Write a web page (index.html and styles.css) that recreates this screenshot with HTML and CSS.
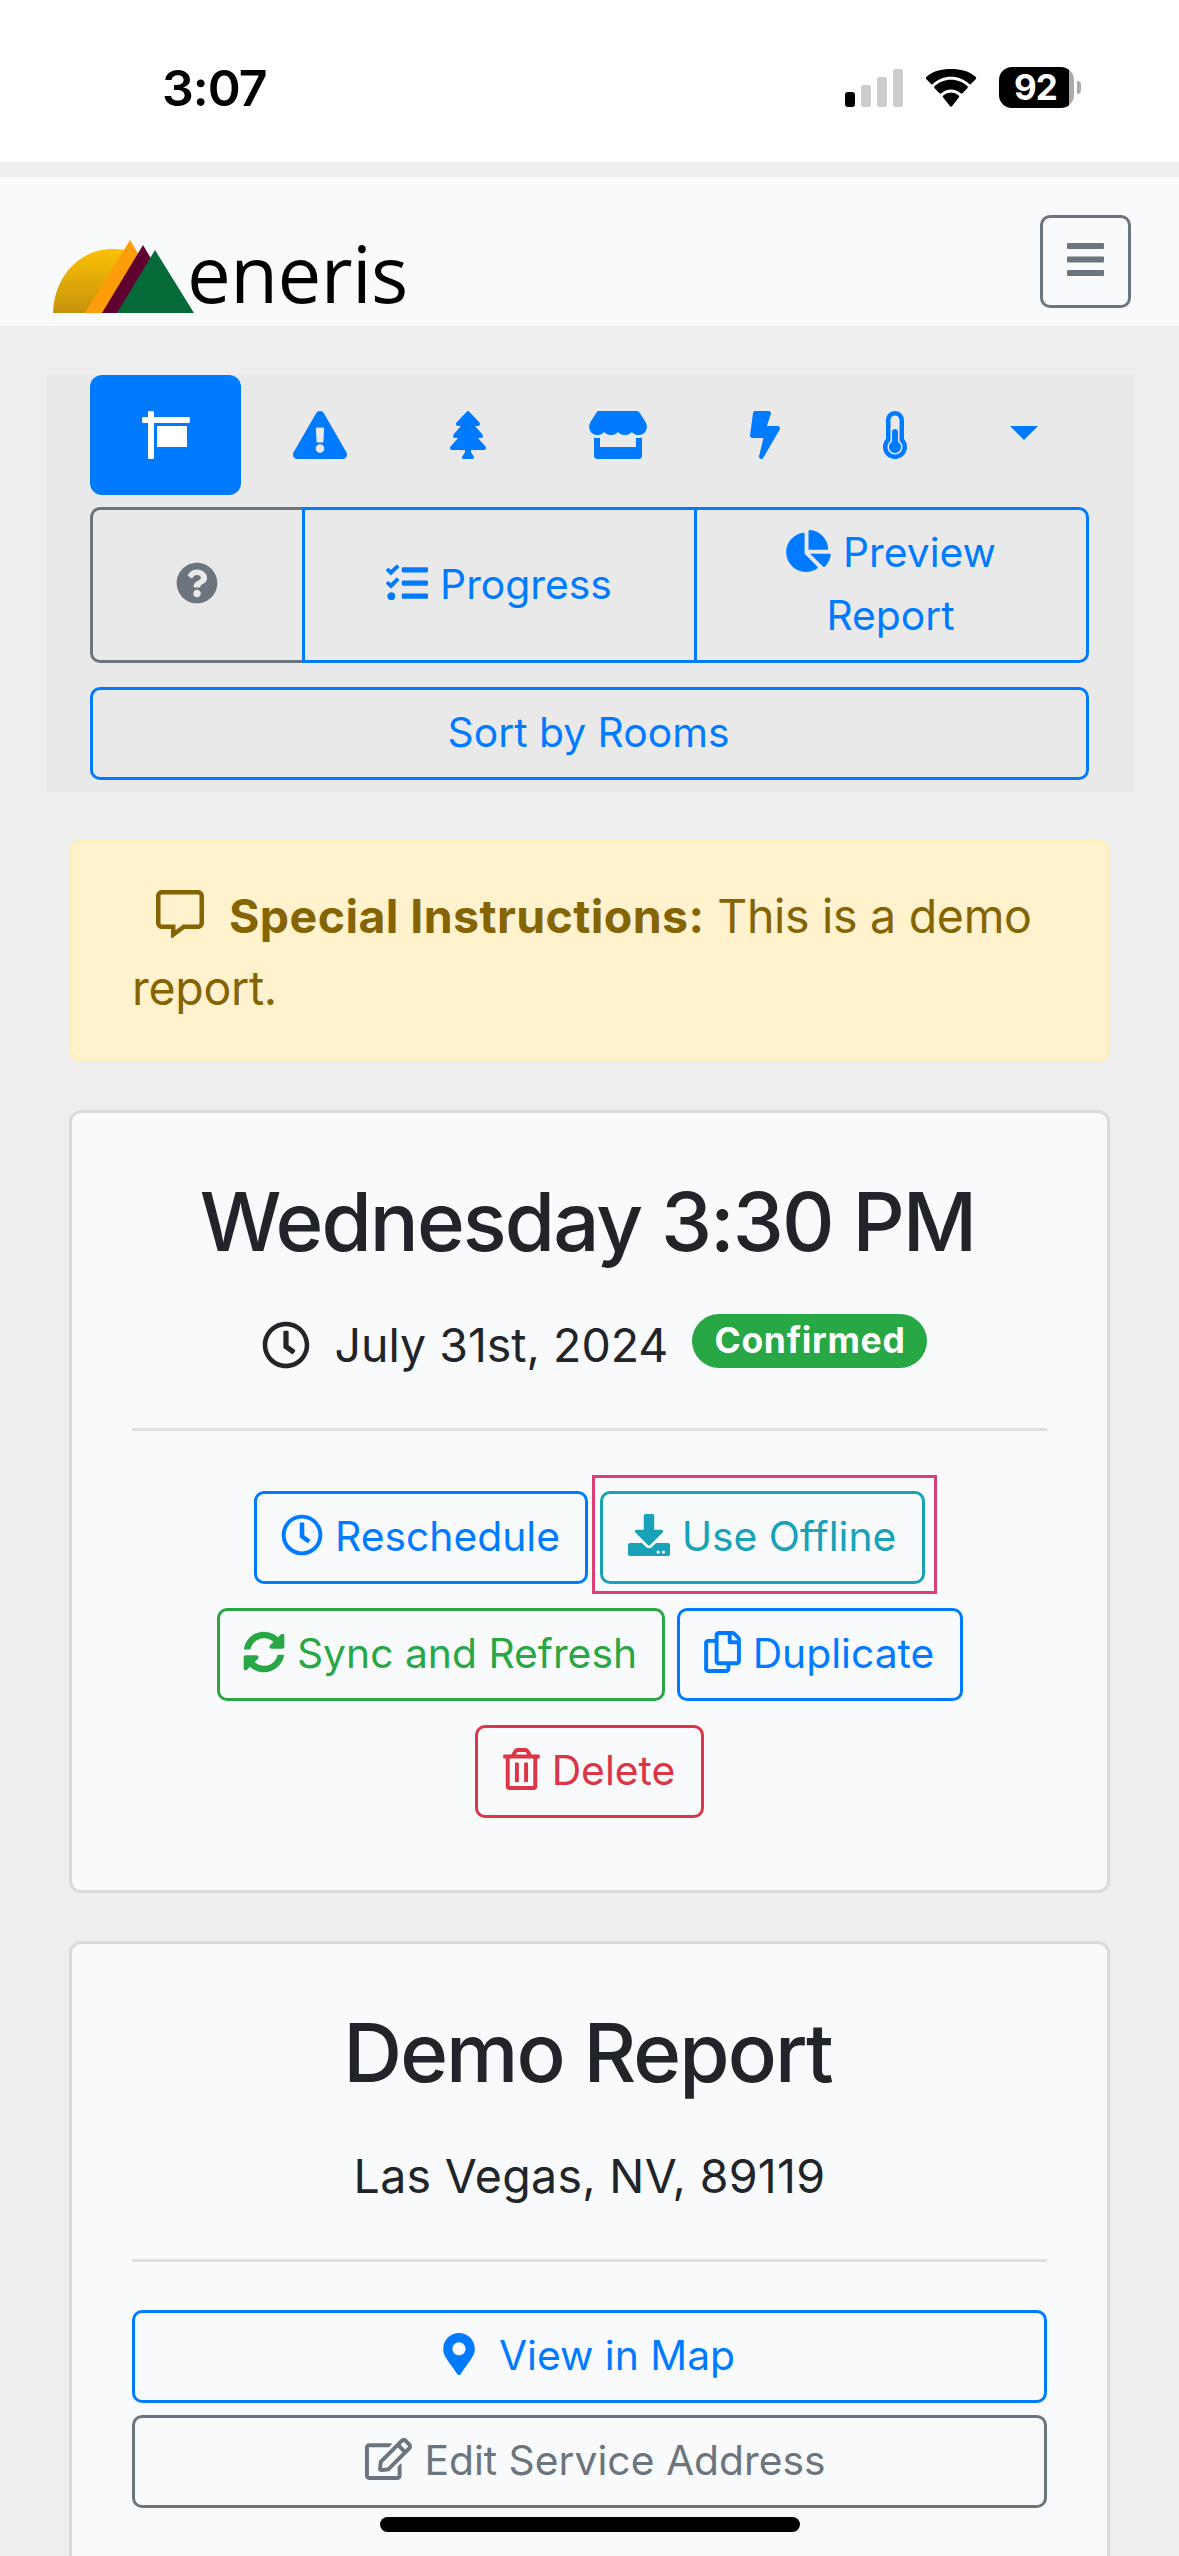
FILE: index.html
```html
<!DOCTYPE html>
<html lang="en">
<head>
<meta charset="utf-8">
<title>Demo Report</title>
<link rel="stylesheet" href="styles.css">
</head>
<body>
<div class="screen">
  <header class="status">
    <span class="status-time">3:07</span>
    <div class="status-icons">
      <svg width="58" height="38" viewBox="0 0 58 38"><rect x="0" y="23" width="10" height="15" rx="3" fill="#000"/><g fill="#ccc"><rect x="16" y="16" width="10" height="22" rx="3"/><rect x="32" y="8" width="10" height="30" rx="3"/><rect x="48" y="0" width="10" height="38" rx="3"/></g></svg>
      <svg class="wifi" width="52" height="38" viewBox="0 0 52 38"><path d="M26 7.800c7 0 13.400 2.700 18.200 7.200.5.500 1.300.5 1.800 0l4.800-5a1.500 1.500 0 0 0 0-2C44.300 1.800 35.600 0 26 0S7.700 1.800 1.200 8a1.500 1.500 0 0 0 0 2L6 15c.5.500 1.300.5 1.800 0C12.600 10.500 19 7.800 26 7.800z"/><path d="M26 20.500c3.700 0 7.100 1.400 9.700 3.700.5.500 1.300.5 1.800 0l4.900-5c.6-.6.600-1.500 0-2.100C38 13 32.300 10.700 26 10.700S14 13 9.600 17.100c-.6.6-.6 1.500 0 2.100l4.900 5c.5.500 1.300.5 1.800 0 2.600-2.300 6-3.700 9.700-3.700z"/><path d="M33.800 28.500c.6-.6.600-1.500 0-2a12 12 0 0 0-15.600 0c-.6.5-.6 1.400 0 2l6.800 8.800c.6.600 1.400.6 2 0z"/></svg>
      <div class="battery"><span class="battery-level">92</span></div>
    </div>
  </header>

  <nav class="navbar">
    <a class="brand">
      <svg width="142" height="74" viewBox="0 0 142 74">
        <defs><linearGradient id="sun" x1="0" y1="0" x2="0" y2="1"><stop offset="0" stop-color="#fcc003"/><stop offset="1" stop-color="#c5930d"/></linearGradient></defs>
        <path d="M0 73C1 38 25 9 60 9c8 0 16 1 24 5L50 73z" fill="url(#sun)"/>
        <path d="M77 0l10 17-36 56H32z" fill="#ff9c0a"/>
        <path d="M90 5l10 17-34 51H49z" fill="#5f0230"/>
        <path d="M102 10l39 63H64z" fill="#046a38"/>
      </svg>
      <span class="brand-name">eneris</span>
    </a>
    <button class="menu" aria-label="Menu"><svg width="37" height="33" viewBox="0 0 37 33"><rect width="37" height="6" rx="1"/><rect y="13.500" width="37" height="6" rx="1"/><rect y="27" width="37" height="6" rx="1"/></svg></button>
  </nav>

  <section class="toolbar">
    <div class="tabs">
      <a class="tab active"><svg width="48" height="48" viewBox="0 0 512 512"><path d="M496 64H128V16c0-8.800-7.200-16-16-16H80c-8.800 0-16 7.200-16 16v48H16C7.200 64 0 71.200 0 80v32c0 8.800 7.200 16 16 16h48v368c0 8.800 7.200 16 16 16h32c8.800 0 16-7.200 16-16V128h368c8.800 0 16-7.200 16-16V80c0-8.800-7.200-16-16-16zM160 384h320V160H160v224z"/></svg></a>
      <a class="tab"><svg width="54" height="48" viewBox="0 0 576 512"><path d="M569.517 440.013C587.975 472.007 564.806 512 527.940 512H48.054c-36.937 0-59.999-40.055-41.577-71.987L246.423 23.985c18.467-32.009 64.720-31.951 83.154 0l239.940 416.028zM288 354c-25.405 0-46 20.595-46 46s20.595 46 46 46 46-20.595 46-46-20.595-46-46-46zm-43.673-165.346l7.418 136c.347 6.364 5.609 11.346 11.982 11.346h48.546c6.373 0 11.635-4.982 11.982-11.346l7.418-136c.375-6.874-5.098-12.654-11.982-12.654h-63.383c-6.884 0-12.356 5.780-11.981 12.654z"/></svg></a>
      <a class="tab"><svg width="36" height="48" viewBox="0 0 384 512"><path d="M378.310 378.490L298.420 288h30.630c9.010 0 16.980-5 20.780-13.060 3.800-8.040 2.550-17.260-3.280-24.050L268.420 160h28.890c9.100 0 17.300-5.350 20.860-13.610 3.520-8.130 1.860-17.590-4.240-24.080L203.660 4.830c-6.030-6.450-17.280-6.450-23.320 0L70.060 122.310c-6.100 6.490-7.750 15.950-4.240 24.080C69.380 154.650 77.590 160 86.690 160h28.890l-78.140 90.910c-5.810 6.780-7.060 15.990-3.270 24.040C37.970 283 45.930 288 54.950 288h30.630L5.690 378.490c-6 6.790-7.360 16.090-3.560 24.260C5.940 410.870 14.300 416 23.350 416H160v24.450l-30.290 48.400c-5.320 10.640 2.420 23.160 14.310 23.160h95.960c11.890 0 19.630-12.520 14.310-23.160L224 440.450V416h136.650c9.050 0 17.410-5.130 21.220-13.250 3.800-8.170 2.440-17.470-3.560-24.260z"/></svg></a>
      <a class="tab"><svg width="58" height="48" viewBox="0 0 616 512"><path d="M602 118.600L537.100 15C531.300 5.700 521 0 510 0H106C95 0 84.700 5.700 78.900 15L14 118.600c-33.500 53.500-3.800 127.900 58.800 136.400 4.500.6 9.100.9 13.700.9 29.600 0 55.800-13 73.800-33.100 18 20.100 44.300 33.100 73.800 33.100 29.600 0 55.800-13 73.800-33.100 18 20.100 44.300 33.100 73.800 33.100 29.600 0 55.800-13 73.800-33.100 18.100 20.100 44.300 33.100 73.800 33.100 4.700 0 9.200-.3 13.700-.9 62.800-8.400 92.600-82.800 59-136.400zM529.500 288c-10 0-19.900-1.500-29.500-3.800V384H116v-99.800c-9.600 2.200-19.500 3.800-29.500 3.800-6 0-12.100-.4-18-1.200-5.600-.8-11.100-2.100-16.400-3.600V480c0 17.700 14.300 32 32 32h448c17.700 0 32-14.300 32-32V283.200c-5.400 1.600-10.800 2.900-16.400 3.600-6.100.8-12.100 1.200-18.200 1.200z"/></svg></a>
      <a class="tab"><svg width="30" height="48" viewBox="0 0 320 512"><path d="M296 160H180.600l42.600-129.800C227.200 15 215.700 0 200 0H56C44 0 33.800 8.900 32.200 20.800l-32 240C-1.700 275.200 9.500 288 24 288h118.700L96.600 482.500c-3.600 15.200 8 29.500 23.300 29.500 8.400 0 16.400-4.400 20.800-12l176-304c9.300-15.900-2.200-36-20.700-36z"/></svg></a>
      <a class="tab"><svg width="24" height="48" viewBox="0 0 256 512"><path fill-rule="evenodd" d="M192 384c0 35.300-28.700 64-64 64s-64-28.700-64-64c0-23.700 12.900-44.300 32-55.400V224c0-17.700 14.300-32 32-32s32 14.300 32 32v104.600c19.100 11.100 32 31.700 32 55.400zm32-84.653c19.912 22.563 32 52.194 32 84.653 0 70.696-57.303 128-128 128S0 454.696 0 384c0-32.459 12.088-62.090 32-84.653V96c0-53.019 42.981-96 96-96s96 42.981 96 96v203.347zM208 384c0-34.339-19.370-52.190-32-66.502V96c0-26.467-21.533-48-48-48S80 69.533 80 96v221.498C67.268 331.926 48 350 48 384c0 44 36 80 80 80s80-35.888 80-80z"/></svg></a>
      <a class="tab"><svg width="28" height="14" viewBox="0 0 28 14"><path d="M0 0h28L14 14z"/></svg></a>
    </div>
    <div class="button-group">
      <button class="btn gray help" aria-label="Help"><svg width="42" height="42" viewBox="0 0 512 512"><path d="M504 256c0 136.997-111.043 248-248 248S8 392.997 8 256C8 119.083 119.043 8 256 8s248 111.083 248 248zM262.655 90c-54.497 0-89.255 22.957-116.549 63.758-3.536 5.286-2.353 12.415 2.715 16.258l34.699 26.310c5.205 3.947 12.621 3.008 16.665-2.122 17.864-22.658 30.113-35.797 57.303-35.797 20.429 0 45.698 13.148 45.698 32.958 0 14.976-12.363 22.667-32.534 33.976C247.128 238.528 216 254.941 216 296v4c0 6.627 5.373 12 12 12h56c6.627 0 12-5.373 12-12v-1.333c0-28.462 83.186-29.647 83.186-106.667 0-58.002-60.165-102-116.531-102zM256 338c-25.365 0-46 20.635-46 46 0 25.364 20.635 46 46 46s46-20.636 46-46c0-25.365-20.635-46-46-46z"/></svg></button>
      <button class="btn progress"><svg width="42" height="42" viewBox="0 0 512 512"><path d="M139.610 35.500a12 12 0 0 0-17 0L58.930 98.810l-22.700-22.120a12 12 0 0 0-17 0L3.530 92.410a12 12 0 0 0 0 17l47.590 47.400a12.780 12.780 0 0 0 17.610 0l15.590-15.620L156.520 69a12.090 12.090 0 0 0 .09-17zm0 159.190a12 12 0 0 0-17 0l-63.680 63.720-22.700-22.100a12 12 0 0 0-17 0L3.530 252a12 12 0 0 0 0 17L51 316.500a12.770 12.770 0 0 0 17.600 0l15.700-15.690 72.200-72.220a12 12 0 0 0 .09-16.900zM64 368c-26.490 0-48.590 21.500-48.590 48S37.530 464 64 464a48 48 0 0 0 0-96zm432 16H208a16 16 0 0 0-16 16v32a16 16 0 0 0 16 16h288a16 16 0 0 0 16-16v-32a16 16 0 0 0-16-16zm0-320H208a16 16 0 0 0-16 16v32a16 16 0 0 0 16 16h288a16 16 0 0 0 16-16V80a16 16 0 0 0-16-16zm0 160H208a16 16 0 0 0-16 16v32a16 16 0 0 0 16 16h288a16 16 0 0 0 16-16v-32a16 16 0 0 0-16-16z"/></svg><span>Progress</span></button>
      <button class="btn preview"><span class="preview-line"><svg width="45" height="42" viewBox="0 0 544 512"><path d="M527.790 288H290.500l158.030 158.030c6.040 6.040 15.980 6.530 22.190.68 38.700-36.460 65.320-85.610 73.130-140.860 1.340-9.460-6.510-17.850-16.060-17.850zm-15.830-64.800C503.720 103.740 408.260 8.280 288.800.04 279.680-.59 272 7.100 272 16.240V240h223.770c9.140 0 16.820-7.680 16.190-16.800zM224 288V50.710c0-9.550-8.390-17.400-17.840-16.060C86.990 51.490-4.100 155.600.14 280.370 4.500 408.510 114.830 513.590 243.030 511.980c50.400-.63 96.970-16.870 135.260-44.030 7.900-5.600 8.420-17.230 1.570-24.080L224 288z"/></svg><span>Preview</span></span><span class="preview-word">Report</span></button>
    </div>
    <button class="btn sort"><span>Sort by Rooms</span></button>
  </section>

  <div class="alert"><svg width="48" height="48" viewBox="0 0 512 512"><path d="M448 0H64C28.700 0 0 28.700 0 64v288c0 35.300 28.700 64 64 64h96v84c0 7.100 5.800 12 12 12 2.400 0 4.900-.7 7.100-2.400L304 416h144c35.300 0 64-28.700 64-64V64c0-35.300-28.700-64-64-64zm16 352c0 8.800-7.200 16-16 16H288l-12.800 9.600L208 428v-60H64c-8.800 0-16-7.200-16-16V64c0-8.800 7.200-16 16-16h384c8.800 0 16 7.200 16 16v288z"/></svg><strong>Special Instructions:</strong> This is a demo report.</div>

  <section class="card appointment">
    <h3>Wednesday 3:30 PM</h3>
    <div class="date">
      <svg width="48" height="48" viewBox="0 0 512 512"><path d="M256 8C119 8 8 119 8 256s111 248 248 248 248-111 248-248S393 8 256 8zm0 448c-110.500 0-200-89.500-200-200S145.500 56 256 56s200 89.500 200 200-89.500 200-200 200zm61.800-104.400l-84.900-61.700c-3.100-2.300-4.900-5.900-4.900-9.700V116c0-6.600 5.400-12 12-12h32c6.600 0 12 5.400 12 12v141.700l66.800 48.600c5.400 3.900 6.500 11.400 2.600 16.800L334.600 349c-3.900 5.300-11.400 6.500-16.800 2.600z"/></svg>
      <span>July 31st, 2024</span><span class="badge">Confirmed</span>
    </div>
    <hr>
    <div class="actions">
      <div class="action-row">
        <button class="btn reschedule"><svg width="42" height="42" viewBox="0 0 512 512"><path d="M256 8C119 8 8 119 8 256s111 248 248 248 248-111 248-248S393 8 256 8zm0 448c-110.500 0-200-89.500-200-200S145.500 56 256 56s200 89.500 200 200-89.500 200-200 200zm61.800-104.400l-84.900-61.700c-3.100-2.300-4.900-5.900-4.900-9.700V116c0-6.600 5.400-12 12-12h32c6.600 0 12 5.400 12 12v141.700l66.800 48.600c5.400 3.900 6.500 11.400 2.600 16.800L334.600 349c-3.900 5.300-11.400 6.500-16.800 2.600z"/></svg><span>Reschedule</span></button>
        <div class="highlighted">
          <button class="btn teal offline"><svg width="42" height="42" viewBox="0 0 512 512"><path d="M216 0h80c13.300 0 24 10.700 24 24v168h87.700c17.800 0 26.700 21.500 14.100 34.100L269.700 378.300c-7.500 7.500-19.800 7.500-27.300 0L90.100 226.100c-12.600-12.600-3.700-34.100 14.100-34.100H192V24c0-13.300 10.700-24 24-24zm296 376v112c0 13.300-10.700 24-24 24H24c-13.300 0-24-10.700-24-24V376c0-13.300 10.700-24 24-24h146.700l49 49c20.100 20.100 52.500 20.100 72.600 0l49-49H488c13.300 0 24 10.700 24 24zm-124 88c0-11-9-20-20-20s-20 9-20 20 9 20 20 20 20-9 20-20zm64 0c0-11-9-20-20-20s-20 9-20 20 9 20 20 20 20-9 20-20z"/></svg><span>Use Offline</span></button>
        </div>
      </div>
      <div class="action-row">
        <button class="btn green sync"><svg width="42" height="42" viewBox="0 0 512 512"><path d="M370.720 133.280C339.458 104.008 298.888 87.962 255.848 88c-77.458.068-144.328 53.178-162.791 126.850-1.344 5.363-6.122 9.150-11.651 9.150H24.103c-7.498 0-13.194-6.807-11.807-14.176C33.933 94.924 134.813 8 256 8c66.448 0 126.791 26.136 171.315 68.685L463.030 40.970C478.149 25.851 504 36.559 504 57.941V192c0 13.255-10.745 24-24 24H345.941c-21.382 0-32.090-25.851-16.971-40.971l41.750-41.749zM32 296h134.059c21.382 0 32.090 25.851 16.971 40.971l-41.750 41.750c31.262 29.273 71.835 45.319 114.876 45.280 77.418-.070 144.315-53.144 162.787-126.849 1.344-5.363 6.122-9.150 11.651-9.150h57.304c7.498 0 13.194 6.807 11.807 14.176C478.067 417.076 377.187 504 256 504c-66.448 0-126.791-26.136-171.315-68.685L48.970 471.030C33.851 486.149 8 475.441 8 454.059V320c0-13.255 10.745-24 24-24z"/></svg><span>Sync and Refresh</span></button>
        <button class="btn duplicate"><svg width="37" height="42" viewBox="0 0 448 512"><path d="M433.941 65.941l-51.882-51.882A48 48 0 0 0 348.118 0H176c-26.510 0-48 21.490-48 48v48H48c-26.510 0-48 21.490-48 48v320c0 26.510 21.490 48 48 48h224c26.510 0 48-21.490 48-48v-48h80c26.510 0 48-21.490 48-48V99.882a48 48 0 0 0-14.059-33.941zM266 464H54a6 6 0 0 1-6-6V150a6 6 0 0 1 6-6h74v224c0 26.510 21.490 48 48 48h96v42a6 6 0 0 1-6 6zm128-96H182a6 6 0 0 1-6-6V54a6 6 0 0 1 6-6h106v88c0 13.255 10.745 24 24 24h88v202a6 6 0 0 1-6 6zm6-256h-64V48h9.632c1.591 0 3.117.632 4.243 1.757l48.368 48.368a6 6 0 0 1 1.757 4.243V112z"/></svg><span>Duplicate</span></button>
      </div>
      <div class="action-row">
        <button class="btn red delete"><svg width="37" height="42" viewBox="0 0 448 512"><path d="M268 416h24a12 12 0 0 0 12-12V188a12 12 0 0 0-12-12h-24a12 12 0 0 0-12 12v216a12 12 0 0 0 12 12zM432 80h-82.410l-34-56.700A48 48 0 0 0 274.410 0H173.590a48 48 0 0 0-41.160 23.300L98.410 80H16A16 16 0 0 0 0 96v16a16 16 0 0 0 16 16h16v336a48 48 0 0 0 48 48h288a48 48 0 0 0 48-48V128h16a16 16 0 0 0 16-16V96a16 16 0 0 0-16-16zM171.840 50.910A6 6 0 0 1 177 48h94a6 6 0 0 1 5.150 2.910L293.610 80H154.390zM368 464H80V128h288zm-212-48h24a12 12 0 0 0 12-12V188a12 12 0 0 0-12-12h-24a12 12 0 0 0-12 12v216a12 12 0 0 0 12 12z"/></svg><span>Delete</span></button>
      </div>
    </div>
  </section>

  <section class="card report">
    <h3>Demo Report</h3>
    <div class="place">Las Vegas, NV, 89119</div>
    <hr>
    <div class="links">
      <button class="btn map"><svg width="32" height="42" viewBox="0 0 384 512"><path d="M172.268 501.670C26.970 291.031 0 269.413 0 192 0 85.961 85.961 0 192 0s192 85.961 192 192c0 77.413-26.970 99.031-172.268 309.670-9.535 13.774-29.930 13.773-39.464 0zM192 272c44.183 0 80-35.817 80-80s-35.817-80-80-80-80 35.817-80 80 35.817 80 80 80z"/></svg><span>View in Map</span></button>
      <button class="btn gray edit"><svg width="47" height="42" viewBox="0 0 576 512"><path d="M402.300 344.900l32-32c5-5 13.700-1.500 13.700 5.700V464c0 26.500-21.500 48-48 48H48c-26.500 0-48-21.500-48-48V112c0-26.500 21.500-48 48-48h273.500c7.100 0 10.700 8.600 5.700 13.700l-32 32c-1.500 1.500-3.500 2.300-5.700 2.300H48v352h352V350.500c0-2.100.8-4.100 2.300-5.600zm156.600-201.800L296.300 405.700l-90.400 10c-26.200 2.900-48.500-19.200-45.600-45.600l10-90.400L432.900 17.100c22.900-22.900 59.900-22.900 82.700 0l43.200 43.200c22.900 22.900 22.900 60 .1 82.800zM460.100 174L402 115.900 216.200 301.800l-7.300 65.300 65.300-7.300L460.100 174zm64.800-79.700l-43.200-43.200c-4.100-4.100-10.800-4.100-14.800 0L436 82l58.100 58.100 30.900-30.900c4-4.200 4-10.800-.1-14.900z"/></svg><span>Edit Service Address</span></button>
    </div>
  </section>
  <div class="home-indicator"></div>
</div>
</body>
</html>
```
FILE: styles.css
```css
* { box-sizing: border-box; }

body {
  margin: 0;
  background: #eee;
  color: #212529;
  font-family: Inter, "Liberation Sans", sans-serif;
  font-size: 46.5px;
  line-height: 72px;
}

svg { display: block; flex: none; fill: currentColor; }

.screen {
  position: relative;
  width: 1179px;
  height: 2556px;
  overflow: hidden;
}

/* Phone status bar */
.status {
  display: flex;
  justify-content: space-between;
  height: 162px;
  padding: 0 98px 0 162px;
  background: #fff;
  color: #000;
}

.status-time {
  margin-top: 52px;
  font-size: 50px;
  font-weight: 600;
  letter-spacing: -1px;
}

.status-icons {
  display: flex;
  height: 41px;
  margin-top: 67px;
  align-items: center;
}

.wifi { margin: 0 22px; }

.battery {
  display: flex;
  align-items: center;
  width: 82px;
}

.battery::after {
  content: "";
  width: 4px;
  height: 13px;
  margin-left: 3px;
  border-radius: 0 4px 4px 0;
  background: #aaa;
}

.battery-level {
  width: 75px;
  height: 41px;
  padding-right: 2px;
  border-radius: 13px;
  background: linear-gradient(90deg, #000 70px, #aaa 70px);
  color: #fff;
  font-size: 35px;
  font-weight: 700;
  letter-spacing: -1px;
  line-height: 41px;
  text-align: center;
}

/* Brand bar */
.navbar {
  display: flex;
  justify-content: space-between;
  align-items: flex-start;
  height: 149px;
  margin-top: 15px;
  padding: 38px 48px 0 53px;
  background: #f9fafc;
}

.brand {
  display: flex;
  align-items: flex-end;
  height: 99px;
  color: #000;
}

.brand-name {
  margin: 0 0 -12px -8px;
  font-family: "Open Sans", "Noto Sans", sans-serif;
  font-size: 78px;
  letter-spacing: -.6px;
  line-height: 106px;
}

.menu {
  display: flex;
  align-items: center;
  justify-content: center;
  width: 91px;
  height: 93px;
  padding: 0 0 5px;
  border: 3px solid #6c757d;
  border-radius: 10px;
  background: none;
  color: #6c757d;
}

/* Buttons */
.btn {
  display: flex;
  align-items: center;
  justify-content: center;
  gap: 12px;
  height: 93px;
  padding: 11px 0 13px;
  border: 3px solid currentColor;
  border-radius: 10px;
  background: none;
  color: #007bff;
  font: 400 40.8px/63px Inter, "Liberation Sans", sans-serif;
  white-space: nowrap;
}

.btn svg { margin: 0 0 3px -1px; }
.gray { color: #6c757d; }
.teal { color: #17a2b8; }
.green { color: #28a745; }
.red { color: #dc3545; }

/* Section toolbar */
.toolbar {
  display: flex;
  flex-direction: column;
  width: 1089px;
  height: 417px;
  margin: 49px 0 0 46px;
  padding: 0 46px 0 44px;
  background: #e9e9e9;
}

.tabs {
  display: flex;
  height: 120px;
  margin-bottom: 12px;
  color: #007bff;
}

.tab {
  display: flex;
  flex: none;
  align-items: center;
  justify-content: center;
  padding: 0 51.5px;
}

.tab:nth-child(7) { padding-bottom: 4px; }

.active {
  border-radius: 12px;
  background: #007bff;
  color: #fff;
}

.button-group {
  display: flex;
  height: 156px;
  margin-bottom: 24px;
}

.button-group .btn { height: 156px; }
.help { width: 212px; border-right: 0; border-radius: 10px 0 0 10px; }
.progress { width: 395px; border-radius: 0; }
.preview {
  flex: 1;
  flex-direction: column;
  gap: 0;
  margin-left: -3px;
  border-radius: 0 10px 10px 0;
}

.preview-line { display: flex; align-items: center; gap: 12px; }
.preview-word { padding-right: 2px; }
.sort { padding-right: 2px; }

/* Notice */
.alert {
  width: 1041px;
  height: 222px;
  margin: 48px 0 0 69px;
  padding: 37px 60px 29px;
  border: 3px solid #ffeeba;
  border-radius: 12px;
  background: #fff2cd;
  color: #856404;
  letter-spacing: -.3px;
}

.alert svg {
  display: inline-block;
  margin: 0 25px 0 24px;
  vertical-align: -5px;
}

.alert strong { font-weight: 700; letter-spacing: .4px; }

/* Cards */
.card {
  width: 1041px;
  margin: 48px 0 0 69px;
  padding: 60px;
  border: 3px solid #dadbdc;
  border-radius: 12px;
  background: #f9fafc;
}

.appointment { height: 783px; }
.report { height: 700px; }

.card h3 {
  margin: -2px 0 26px;
  padding-right: 4px;
  font-size: 81.5px;
  font-weight: 500;
  letter-spacing: -1.95px;
  line-height: 101px;
  text-align: center;
  white-space: nowrap;
}

.card hr {
  height: 3px;
  margin: 48px 0;
  border: 0;
  background: #dedfe1;
}

.date {
  display: flex;
  align-items: center;
  justify-content: center;
  height: 82px;
  padding: 12px 0 0 10px;
}

.date svg { margin-right: 24px; }

.badge {
  height: 54px;
  margin: 0 0 8px 24px;
  padding: 0 21px 0 22px;
  border-radius: 27px;
  background: #28a745;
  color: #fff;
  font-size: 35.5px;
  font-weight: 700;
  letter-spacing: .7px;
  line-height: 53px;
}

.actions { display: flex; flex-direction: column; gap: 24px; margin-top: 60px; }
.action-row { display: flex; justify-content: center; gap: 12px; }
.reschedule { width: 334px; }
.offline { width: 325px; }
.sync { width: 448px; }
.duplicate { width: 286px; }
.delete { width: 229px; }

.highlighted { position: relative; }

.highlighted::after {
  content: "";
  position: absolute;
  inset: -16px -12px -10px -8px;
  border: 3px solid #dc3f78;
}

.place { height: 82px; letter-spacing: .3px; line-height: 95px; text-align: center; }
.links { display: flex; flex-direction: column; gap: 12px; }
.map { gap: 24px; }
.edit { padding-left: 13px; }

.home-indicator {
  position: absolute;
  bottom: 24px;
  left: 380px;
  width: 420px;
  height: 15px;
  border-radius: 8px;
  background: #000;
}
```
